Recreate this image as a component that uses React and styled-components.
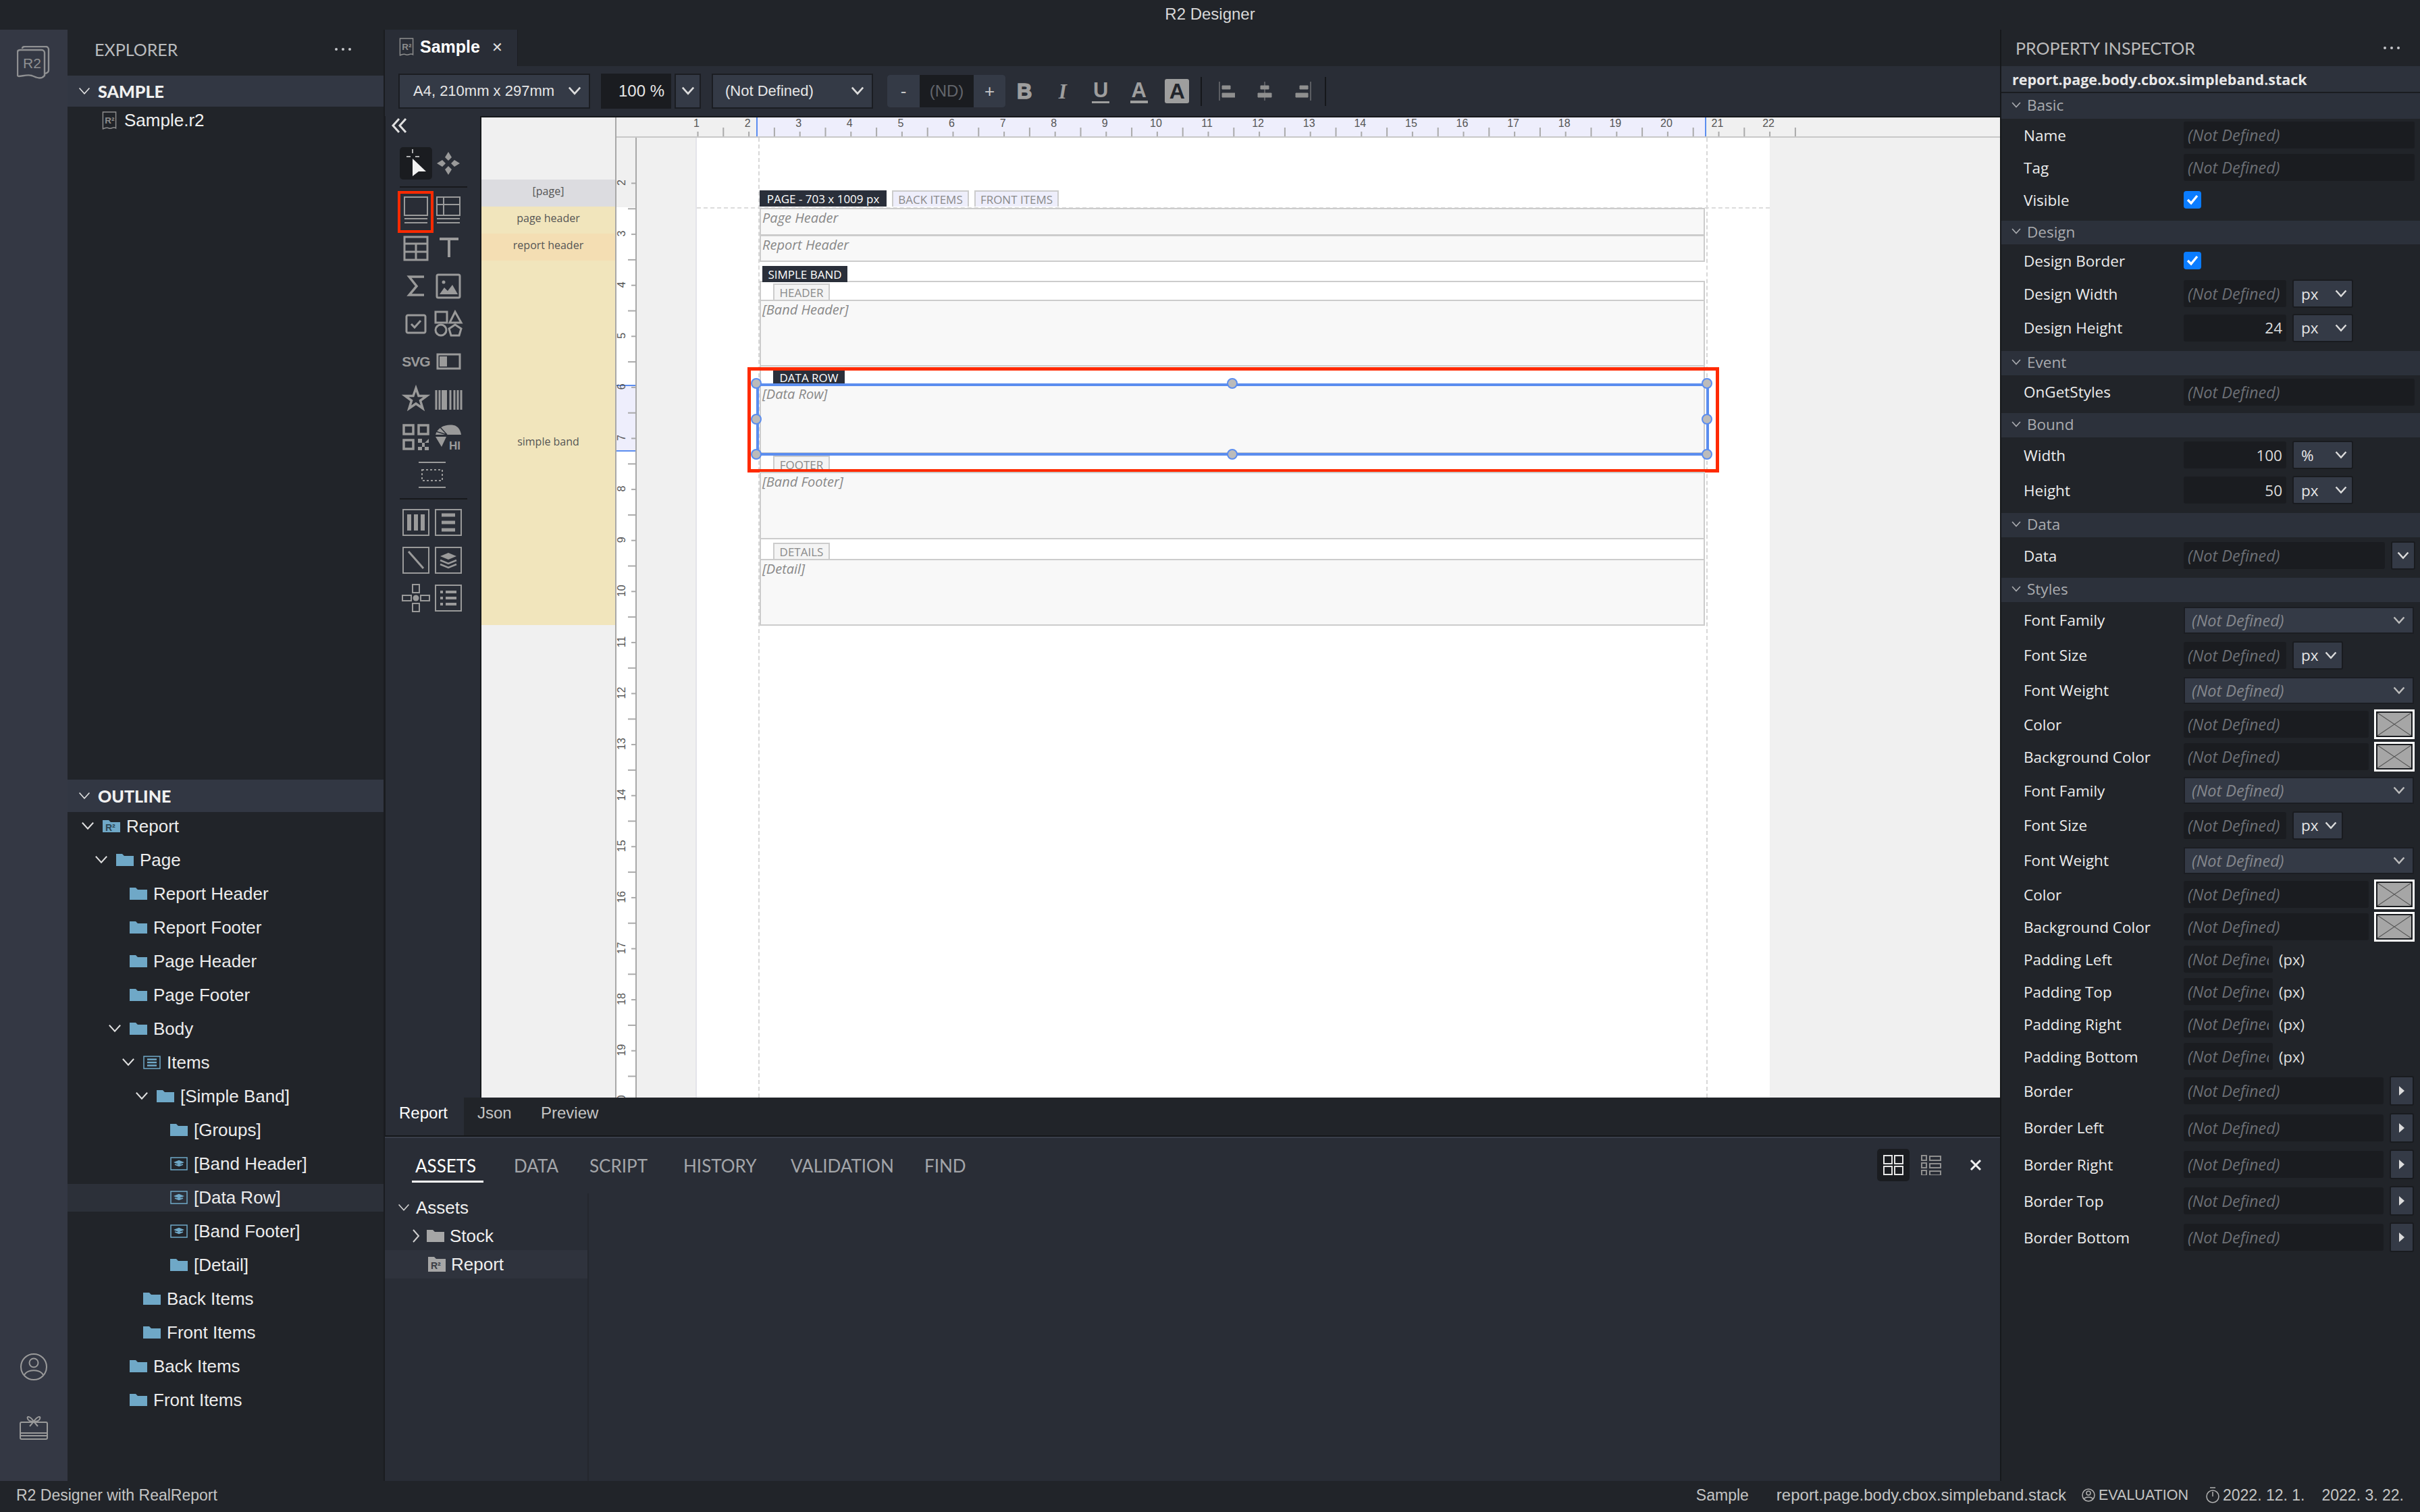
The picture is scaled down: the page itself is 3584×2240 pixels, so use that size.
import React from 'react';
import styled, { createGlobalStyle } from 'styled-components';

const UI = '"Liberation Sans", Arial, sans-serif';
const NOTO = '"Open Sans", "Noto Sans", sans-serif';
const HEAD = 'Lato, "Open Sans", sans-serif';

const GlobalStyle = createGlobalStyle`
  html, body {
    margin: 0;
    padding: 0;
    background: #212429;
    overflow: hidden;
  }
  *, *::before, *::after {
    box-sizing: border-box;
  }
`;

const Shell = styled.div`
  width: 3584px;
  height: 2240px;
  display: grid;
  grid-template-rows: 44px 1fr 46px;
  font-family: ${UI};
  color: #e6e6e6;
  overflow: hidden;
`;

const TitleBar = styled.div`
  background: #212429;
  color: #d8d8d8;
  font-size: 24px;
  display: flex;
  align-items: center;
  justify-content: center;
  padding-bottom: 2px;
`;

const Main = styled.div`
  display: grid;
  grid-template-columns: 100px 470px 2392px 622px;
  min-height: 0;
`;

const ActivityBar = styled.div`
  background: #343844;
  display: flex;
  flex-direction: column;
  align-items: center;
  padding: 24px 0 60px;
`;

const ActivitySpacer = styled.div`
  flex: 1;
`;

const ActivityGap = styled.div`
  height: 50px;
`;

const Explorer = styled.div`
  background: #212429;
  display: flex;
  flex-direction: column;
  border-right: 2px solid #1a1c20;
  min-height: 0;
`;

const ExplorerTop = styled.div`
  height: 1111px;
`;

const PanelHead = styled.div`
  height: 68px;
  display: flex;
  align-items: center;
  justify-content: space-between;
  padding: 0 48px 10px 40px;
  font-family: ${HEAD};
  font-size: 25px;
  color: #b9bbbe;
`;

const Dots = styled.span`
  display: flex;
  gap: 6px;
  i {
    width: 4px;
    height: 4px;
    border-radius: 50%;
    background: #c4c6c9;
  }
`;

const SectionBar = styled.div`
  height: ${p => p.$h}px;
  background: #323743;
  display: flex;
  align-items: center;
  gap: 10px;
  padding-left: 15px;
  font-family: ${HEAD};
  font-weight: 900;
  font-size: 25px;
  color: #f0f0f0;
`;

const FileRow = styled.div`
  height: 40px;
  display: flex;
  align-items: center;
  gap: 10px;
  padding-left: 50px;
  font-size: 26px;
  color: #f0f0f0;
`;

const TreeList = styled.div`
  margin-top: -4px;
`;

const TreeRow = styled.div`
  height: 50px;
  display: flex;
  align-items: center;
`;

const TreeInner = styled.div`
  height: 41px;
  width: 100%;
  display: flex;
  align-items: center;
  padding-left: ${p => 19 + p.$depth * 20}px;
  background: ${p => (p.$selected ? '#2c3039' : 'transparent')};
  font-size: 26px;
  color: #ececec;
`;

const Chevron = styled.span`
  width: 33px;
  display: flex;
  align-items: center;
`;

const NodeIcon = styled.span`
  width: 26px;
  margin-right: 9px;
  display: flex;
`;

const Center = styled.div`
  background: #292d36;
  display: flex;
  flex-direction: column;
  min-height: 0;
  min-width: 0;
`;

const TabStrip = styled.div`
  height: 54px;
  background: #212429;
  display: flex;
`;

const DocTab = styled.div`
  width: 197px;
  background: #292d36;
  display: flex;
  align-items: center;
  padding: 0 0 3px 20px;
  gap: 8px;
  font-size: 25px;
  font-weight: 700;
  color: #fff;
  border-right: 1px solid #1b1d21;
`;

const CloseMark = styled.span`
  margin-left: 9px;
  font-weight: 400;
  font-size: 20px;
  color: #e0e0e0;
`;

const Toolbar = styled.div`
  height: 74px;
  display: flex;
  align-items: center;
  padding: 0 0 0 20px;
  font-size: 22px;
  color: #e6e6e6;
`;

const Select = styled.div`
  width: ${p => p.$w}px;
  height: ${p => p.$h || 52}px;
  margin: 0 ${p => p.$mr || 0}px 0 ${p => p.$ml || 0}px;
  flex-shrink: 0;
  background: #343a46;
  border: 2px solid #1b1d22;
  display: flex;
  align-items: center;
  justify-content: space-between;
  padding: 0 10px 0 ${p => p.$pl || 20}px;
  font-size: ${p => (p.$italic ? 23.5 : 22)}px;
  font-family: ${p => (p.$alt ? NOTO : UI)};
  font-style: ${p => (p.$italic ? 'italic' : 'normal')};
  color: ${p => (p.$italic ? '#85888e' : '#e6e6e6')};
`;

const ZoomValue = styled.div`
  width: 104px;
  height: 52px;
  margin-left: 16px;
  margin-right: 5px;
  background: #1a1c20;
  font-size: 24px;
  display: flex;
  align-items: center;
  justify-content: flex-end;
  padding-right: 10px;
`;

const Stepper = styled.div`
  width: 175px;
  height: 48px;
  margin-left: 21px;
  display: grid;
  grid-template-columns: 48px 80px 47px;
  background: #1a1c20;
  border-radius: 4px;
  overflow: hidden;
`;

const StepButton = styled.div`
  background: #343a46;
  display: flex;
  align-items: center;
  justify-content: center;
  font-size: 26px;
  color: #c8c8c8;
`;

const StepValue = styled.div`
  display: flex;
  align-items: center;
  justify-content: center;
  color: #62656b;
  font-size: 24px;
`;

const FormatIcon = styled.span`
  width: 56.5px;
  display: flex;
  justify-content: center;
  flex-shrink: 0;
`;

const FormatLetter = styled.span`
  height: 36px;
  min-width: 26px;
  display: flex;
  align-items: center;
  justify-content: center;
  font-family: ${p => (p.$serif ? '"Liberation Serif", serif' : UI)};
  font-style: ${p => (p.$serif ? 'italic' : 'normal')};
  font-weight: 700;
  font-size: 31px;
  line-height: 1;
  color: #9e9e9e;
  border-bottom: ${p => (p.$under ? `${p.$under}px solid #9e9e9e` : '0')};
  -webkit-text-stroke: ${p => (p.$heavy ? '1.5px #9e9e9e' : '0')};
`;

const FormatBox = styled.span`
  width: 36px;
  height: 36px;
  display: flex;
  align-items: center;
  justify-content: center;
  background: #9e9e9e;
  border-radius: 3px;
  font-weight: 700;
  font-size: 32px;
  line-height: 1;
  color: #22252c;
`;

const ToolSep = styled.span`
  width: 2px;
  height: 43px;
  background: #15171a;
  margin: 0 ${p => p.$mr || 0}px 0 ${p => p.$ml || 0}px;
`;

const Workspace = styled.div`
  flex: 1;
  display: flex;
  min-height: 0;
`;

const ToolRail = styled.div`
  width: 141px;
  flex-shrink: 0;
  padding-left: 21px;
  border-left: 1px solid #1b1d21;
`;

const Collapse = styled.div`
  height: 46px;
  margin-left: -13px;
  padding-top: 1px;
`;

const ToolRow = styled.div`
  display: grid;
  grid-template-columns: 48px 48px;
`;

const ToolGrid = styled.div`
  display: grid;
  grid-template-columns: 48px 48px;
  grid-auto-rows: 56px;
`;

const Tool = styled.div`
  height: ${p => p.$h || 56}px;
  grid-column: ${p => (p.$wide ? 'span 2' : 'auto')};
  position: relative;
  display: flex;
  align-items: center;
  justify-content: center;
  background: ${p => (p.$active ? '#1a1c20' : 'transparent')};
  border-radius: ${p => (p.$active ? 5 : 0)}px;
  &::after {
    content: '';
    display: ${p => (p.$marked ? 'block' : 'none')};
    position: absolute;
    left: -3px;
    top: 0;
    width: 53px;
    height: 62px;
    border: 4px solid #ff2a00;
  }
`;

const RailDivider = styled.div`
  width: 100px;
  height: 2px;
  margin: ${p => p.$m};
  background: #17191c;
`;

const Canvas = styled.div`
  flex: 1;
  min-width: 0;
  display: flex;
  background: #f0f0f0;
  border-top: 2px solid #16181b;
  border-left: 2px solid #16181b;
`;

const BandLabels = styled.div`
  width: 200px;
  flex-shrink: 0;
  padding-top: 92px;
  border-right: 2px solid #a8a8a8;
  font-family: ${NOTO};
  font-size: 16px;
  color: #555;
`;

const BandLabel = styled.div`
  height: ${p => p.$h}px;
  background: ${p => p.$bg};
  display: flex;
  justify-content: center;
  align-items: ${p => (p.$mid ? 'center' : 'flex-start')};
  padding-top: ${p => (p.$mid ? 0 : 6)}px;
  padding-bottom: ${p => (p.$mid ? 5 : 0)}px;
`;

const Stage = styled.div`
  flex: 1;
  min-width: 0;
  display: flex;
  flex-direction: column;
`;

const StageBody = styled.div`
  flex: 1;
  display: flex;
  min-height: 0;
`;

const RulerSvg = styled.svg`
  display: block;
  flex-shrink: 0;
`;

const PageArea = styled.div`
  flex: 1;
  min-width: 0;
  overflow: hidden;
  padding-left: 87px;
`;

const Page = styled.div`
  position: relative;
  width: 1591px;
  height: 100%;
  background: #fff;
  border-left: 2px solid #e4e4ea;
  padding-left: 91px;
  &::before {
    content: '';
    position: absolute;
    left: 0;
    right: 0;
    top: 103px;
    border-top: 2px dashed #dcdcdc;
  }
`;

const Margins = styled.div`
  position: relative;
  width: 1406px;
  height: 100%;
  border-left: 2px dashed #d8d8d8;
  border-right: 2px dashed #d8d8d8;
  padding-top: 78px;
  font-family: ${NOTO};
`;

const TagRow = styled.div`
  display: flex;
  gap: 8px;
  height: 24px;
  position: relative;
`;

const DarkTag = styled.div`
  width: ${p => p.$w}px;
  height: ${p => p.$h || 24}px;
  margin-top: ${p => p.$mt || 0}px;
  margin-left: ${p => p.$ml || 0}px;
  background: #2a2f3a;
  color: #fff;
  font-size: 17px;
  display: flex;
  align-items: center;
  justify-content: center;
  white-space: nowrap;
  position: relative;
`;

const LightTag = styled.div`
  width: ${p => p.$w}px;
  height: 24px;
  background: ${p => (p.$tint ? '#eeeefb' : '#f4f4f4')};
  border: 2px solid #ccc;
  border-bottom: 0;
  color: #8a8a8a;
  font-size: 17px;
  display: flex;
  align-items: center;
  justify-content: center;
  white-space: nowrap;
`;

const BandBox = styled.div`
  position: relative;
  width: 1400px;
  height: ${p => p.$h}px;
  margin-top: ${p => p.$mt || 0}px;
  background: #f8f8f8;
  border: 2px solid #ccc;
  border-top-width: ${p => p.$top ?? 2}px;
  padding: 0 0 0 2px;
  font-size: 20px;
  font-style: italic;
  color: #888;
  line-height: 26px;
`;

const SimpleHead = styled.div`
  height: ${p => p.$h}px;
  width: 1400px;
  display: flex;
  align-items: flex-end;
  border-left: 2px solid #ccc;
  border-right: 2px solid #ccc;
  border-top: ${p => (p.$rule ? '2px solid #ccc' : '0')};
  margin-top: ${p => (p.$rule ? -2 : 0)}px;
  padding-left: 18px;
`;

const Selection = styled.div`
  position: absolute;
  left: -7px;
  right: -8px;
  top: -3px;
  bottom: -5px;
  border: 4px solid #5b8def;
  border-radius: 3px;
`;

const Handle = styled.span`
  position: absolute;
  width: 16px;
  height: 16px;
  border-radius: 50%;
  background: #bbb;
  border: 2px solid #5b8def;
  left: ${p => p.$x};
  top: ${p => p.$y};
  transform: translate(-50%, -50%);
`;

const Annotation = styled.div`
  position: absolute;
  left: -20px;
  right: -23px;
  top: -27px;
  bottom: -30px;
  border: 5px solid #ff2a00;
`;

const ViewTabs = styled.div`
  height: 56px;
  background: #212429;
  display: flex;
  font-size: 24px;
  color: #c8c8c8;
  border-left: 1px solid #1b1d21;
`;

const ViewTab = styled.div`
  width: ${p => p.$w}px;
  background: ${p => (p.$active ? '#292d36' : 'transparent')};
  color: ${p => (p.$active ? '#fff' : '#c4c4c4')};
  display: flex;
  align-items: center;
  padding-bottom: 10px;
  padding-left: ${p => p.$pl}px;
`;

const BottomPanel = styled.div`
  flex: 0 0 512px;
  border-top: 2px solid #15171a;
  box-shadow: inset 0 2px 0 #3a3f4a;
  display: flex;
  flex-direction: column;
  position: relative;
`;

const BottomTabs = styled.div`
  height: 68px;
  padding: 18px 0 0 40px;
  display: flex;
  font-family: ${HEAD};
  font-size: 26px;
`;

const BottomTab = styled.div`
  width: ${p => p.$w}px;
  height: 50px;
  margin-right: ${p => p.$mr || 0}px;
  padding: 9px 0 0 5px;
  border-bottom: 3px solid ${p => (p.$active ? '#fff' : 'transparent')};
  color: ${p => (p.$active ? '#fff' : '#a3a5a9')};
`;

const BottomTools = styled.div`
  position: absolute;
  top: 18px;
  left: 2210px;
  display: flex;
  align-items: center;
`;

const ViewToggle = styled.span`
  width: 48px;
  height: 48px;
  display: flex;
  align-items: center;
  justify-content: center;
  background: ${p => (p.$active ? '#1a1c20' : 'transparent')};
  border-radius: 5px;
  margin-right: ${p => p.$mr || 0}px;
`;

const AssetPane = styled.div`
  flex: 1;
  width: 302px;
  margin-top: 16px;
  border-right: 2px solid #24272e;
  font-size: 26px;
  color: #f0f0f0;
`;

const AssetRow = styled.div`
  height: 42px;
  display: flex;
  align-items: center;
  gap: 8px;
  padding-left: ${p => p.$pl}px;
  background: ${p => (p.$selected ? '#2f333d' : 'transparent')};
`;

const Inspector = styled.div`
  background: #212429;
  border-left: 2px solid #16181b;
  font-family: ${NOTO};
  min-height: 0;
  overflow: hidden;
`;

const InspectorHead = styled.div`
  height: 54px;
  display: flex;
  align-items: center;
  justify-content: space-between;
  padding: 0 30px 0 21px;
  font-family: ${HEAD};
  font-size: 25px;
  color: #bbb;
`;

const PathBar = styled.div`
  height: 40px;
  background: #2d323c;
  display: flex;
  align-items: center;
  padding-left: 16px;
  font-weight: 700;
  font-size: 21.5px;
  color: #e8e8e8;
  border-bottom: 2px solid #1a1c20;
`;

const Group = styled.div`
  height: ${p => p.$h || 36}px;
  margin-top: ${p => p.$mt || 0}px;
  background: #2c313b;
  display: flex;
  align-items: center;
  gap: 8px;
  padding: 0 0 3px 14px;
  font-size: 22.5px;
  color: #a9abaf;
`;

const PropRow = styled.div`
  height: ${p => p.$h}px;
  display: flex;
  align-items: center;
  padding-left: 33px;
  font-size: 22.5px;
  color: #ececec;
`;

const PropLabel = styled.div`
  width: 237px;
  flex-shrink: 0;
`;

const ValueBox = styled.div`
  width: ${p => p.$w}px;
  height: 40px;
  flex-shrink: 0;
  background: #1a1c20;
  border-radius: 3px;
  display: flex;
  align-items: center;
  justify-content: ${p => (p.$num ? 'flex-end' : 'flex-start')};
  padding: 0 6px;
  white-space: nowrap;
  font-size: ${p => (p.$num ? 22.5 : 23.5)}px;
  font-style: ${p => (p.$num ? 'normal' : 'italic')};
  color: ${p => (p.$num ? '#dcdcdc' : '#6c6f75')};
`;

const ValueText = styled.span`
  overflow: hidden;
  min-width: 0;
`;

const UnitSelect = styled.div`
  width: ${p => p.$w || 90}px;
  height: 42px;
  margin-left: ${p => p.$ml || 9}px;
  flex-shrink: 0;
  background: #343a46;
  border: 2px solid #191b1f;
  border-radius: 3px;
  display: flex;
  align-items: center;
  justify-content: space-between;
  padding: 0 6px 0 11px;
  color: #e6e6e6;
`;

const IconButton = styled.div`
  width: 36px;
  height: ${p => p.$h || 42}px;
  margin-left: ${p => p.$ml}px;
  flex-shrink: 0;
  background: #343a46;
  border: 2px solid #191b1f;
  border-radius: 3px;
  display: flex;
  align-items: center;
  justify-content: center;
`;

const Check = styled.div`
  width: 26px;
  height: 26px;
  background: #0a7cff;
  border-radius: 4px;
  display: flex;
  align-items: center;
  justify-content: center;
`;

const Swatch = styled.div`
  width: 60px;
  height: 44px;
  margin-left: 8px;
  background: #1a1c20;
  border: 3px solid #fff;
  padding: 2px;
  display: flex;
`;

const PxNote = styled.span`
  margin-left: 9px;
  color: #e0e0e0;
  font-size: 22px;
`;

const StatusBar = styled.div`
  background: #212429;
  display: flex;
  align-items: center;
  justify-content: space-between;
  padding: 0 24px 4px 24px;
  font-size: 23px;
  color: #c4c4c4;
`;

const StatusRight = styled.div`
  display: flex;
  align-items: center;
`;

const StatusItem = styled.span`
  display: flex;
  align-items: center;
  gap: 5px;
  margin-left: ${p => p.$ml || 0}px;
  font-size: ${p => p.$size || 23}px;
`;

const GRAY = '#9a9a9a';

function Caret({ size = 24, color = '#dcdcdc', w = 3 }) {
  return (
    <svg width={size} height={size * 0.7} viewBox="0 0 24 17" fill="none" style={{ flexShrink: 0 }}>
      <path d="M3 3 L12 13 L21 3" stroke={color} strokeWidth={w} />
    </svg>
  );
}

function Folder({ color = '#6fa8c7' }) {
  return (
    <svg width="26" height="20" viewBox="0 0 26 20">
      <path d="M0 1 H9 L12 4 H26 V19 H0 Z" fill={color} />
    </svg>
  );
}

function R2Folder() {
  return (
    <svg width="26" height="20" viewBox="0 0 26 20">
      <path d="M0 1 H9 L12 4 H26 V19 H0 Z" fill="#6fa8c7" />
      <text x="4" y="17" fontSize="14" fontWeight="700" fontFamily={UI} fill="#2c4653">R²</text>
    </svg>
  );
}

function FramedIcon({ kind }) {
  return (
    <svg width="26" height="20" viewBox="0 0 26 20" fill="none">
      <rect x="1" y="1" width="24" height="18" stroke="#6fa8c7" strokeWidth="1.5" />
      {kind === 'stack' ? (
        <path d="M7 8 L13 5.5 L19 8 L13 10.5 Z M7 11 L13 13.5 L19 11" stroke="#6fa8c7" strokeWidth="1.5" fill="#6fa8c7" />
      ) : (
        <path d="M6 5.5 H20 M6 10 H20 M6 14.5 H20" stroke="#6fa8c7" strokeWidth="2.5" />
      )}
    </svg>
  );
}

function DocGlyph({ size = 24 }) {
  return (
    <svg width={size} height={size * 1.2} viewBox="0 0 24 30" fill="none" style={{ flexShrink: 0 }}>
      <path d="M2 2 H22 V27 C18 24 14 29 11 27 C8 25 5 27 2 28 Z" stroke="#8e8e8e" strokeWidth="1.5" />
      <text x="5" y="20" fontSize="14" fontFamily={UI} fontWeight="700" fill="#8e8e8e">R²</text>
    </svg>
  );
}

function Logo() {
  return (
    <svg width="50" height="50" viewBox="0 0 50 50" fill="none">
      <path d="M8 4 C8 2 10 1 12 1 H43 C45 1 47 3 47 5 V36 C47 39 45 40 42 41" stroke="#8f9092" strokeWidth="2.4" />
      <path d="M1 9 C1 7 3 6 5 6 H37 C39 6 41 8 41 10 V44 C36 50 29 47 22 44 C15 42 8 45 3 45 C1 45 1 44 1 42 Z" stroke="#8f9092" strokeWidth="2.4" fill="#343844" />
      <text x="9" y="33" fontSize="21" fontFamily={UI} fill="#8f9092">R2</text>
    </svg>
  );
}

function UserIcon() {
  return (
    <svg width="42" height="42" viewBox="0 0 42 42" fill="none" stroke={GRAY} strokeWidth="2">
      <circle cx="21" cy="21" r="19" />
      <circle cx="21" cy="15" r="6.5" />
      <path d="M7 33 C12 24 30 24 35 33" />
    </svg>
  );
}

function GiftIcon() {
  return (
    <svg width="42" height="38" viewBox="0 0 42 38" fill="none" stroke={GRAY} strokeWidth="2">
      <rect x="1" y="11" width="40" height="25" rx="2" />
      <path d="M1 27 H41 M1 31 H41" />
      <path d="M21 10 C16 2 10 1 12 6 C13 9 18 10 21 10 C24 10 29 9 30 6 C32 1 26 2 21 10 L15 17 M21 10 L27 17" />
    </svg>
  );
}

const toolIcons = {
  pointer: (
    <>
      <path d="M19 17 L39 36 L28 36 L19 43 Z" fill="#f2f2f2" stroke="none" />
      <path d="M19 3 V9 M10 14 H16 M23 14 H29" stroke="#e0e0e0" strokeWidth="1.5" />
    </>
  ),
  move: (
    <path d="M24 7 L29 15 L24 20 L19 15 Z M24 41 L29 33 L24 28 L19 33 Z M7 24 L15 19 L20 24 L15 29 Z M41 24 L33 19 L28 24 L33 29 Z" fill={GRAY} stroke="none" />
  ),
  band: <path d="M7 9 H41 V36 H7 Z M7 41 H41 M7 47 H41" />,
  bandTable: <path d="M7 9 H41 V36 H7 Z M7 20 H41 M17 9 V36 M7 41 H41 M7 47 H41" />,
  table: <path d="M7 12 H41 V46 H7 Z M7 22 H41 M24 22 V46 M7 34 H41" strokeWidth="3" />,
  text: <path d="M11 15 H39 M25 15 V42" strokeWidth="4" />,
  sigma: <path d="M36 15 H14 L25 29 L14 42 H36" strokeWidth="3.5" />,
  image: (
    <>
      <rect x="7" y="12" width="34" height="34" rx="2" strokeWidth="3" />
      <circle cx="17" cy="23" r="2.5" fill={GRAY} stroke="none" />
      <path d="M11 41 L18 31 L23 36 L30 27 L38 41 Z" fill={GRAY} stroke="none" />
    </>
  ),
  check: <path d="M12 16 H36 C37 16 38 17 38 18 V40 C38 41 37 42 36 42 H12 C11 42 10 41 10 40 V18 C10 17 11 16 12 16 Z M17 29 L22 34 L31 24" strokeWidth="3" />,
  shapes: (
    <g strokeWidth="3">
      <rect x="5" y="11" width="17" height="16" />
      <path d="M34 11 L43 27 H26 Z" />
      <circle cx="13" cy="38" r="8" />
      <path d="M34 30 L43 36 L40 46 H28 L25 36 Z" />
    </g>
  ),
  svg: <text x="24" y="36" textAnchor="middle" fontSize="21" fontWeight="700" fontFamily={UI} fill={GRAY} stroke="none" letterSpacing="-1">SVG</text>,
  toggle: (
    <>
      <rect x="8" y="18" width="33" height="21" strokeWidth="3" />
      <rect x="11" y="21" width="11" height="15" fill={GRAY} stroke="none" />
    </>
  ),
  star: <path d="M24 12 L28 23.5 H40 L30.5 30.5 L34 42 L24 35 L14 42 L17.5 30.5 L8 23.5 H20 Z" strokeWidth="3.5" />,
  barcode: (
    <>
      <path d="M6 15 V44 M11 15 V44 M33 15 V44 M38 15 V44 M43 15 V44 M27 15 V44" strokeWidth="3" />
      <path d="M18 15 V44" strokeWidth="8" />
    </>
  ),
  qr: (
    <g strokeWidth="3.5">
      <rect x="6" y="11" width="14" height="13" />
      <rect x="28" y="11" width="14" height="13" />
      <rect x="6" y="33" width="14" height="13" />
      <path d="M27 31 H33 V37 H27 Z M37 37 H43 V31 M33 37 H37 V43 H33 Z M27 43 H33 V48 H27 Z M37 43 H43 V48 H37 Z" fill={GRAY} strokeWidth="0" />
    </g>
  ),
  chart: (
    <>
      <path d="M5 25 C8 14 20 9 32 11 C38 12 42 18 43 25 H23 Z" fill={GRAY} stroke="none" />
      <path d="M5 28 H21 L14 43 Z" fill={GRAY} stroke="none" />
      <path d="M22 25 L5 20 M22 25 L12 14" stroke="#292d36" strokeWidth="1.5" />
      <text x="25" y="47" fontSize="17" fontWeight="700" fontFamily={UI} fill={GRAY} stroke="none">HI</text>
    </>
  ),
  frame: (
    <>
      <path d="M28 10 H68 M28 47 H68" />
      <rect x="33" y="21" width="30" height="16" strokeDasharray="3 3" strokeWidth="2" />
    </>
  ),
  columns: (
    <>
      <rect x="5" y="9" width="38" height="38" strokeWidth="2" />
      <path d="M14 16 V40 M24 16 V40 M34 16 V40" strokeWidth="6" />
    </>
  ),
  rows: (
    <>
      <rect x="5" y="9" width="38" height="38" strokeWidth="2" />
      <path d="M14 17 H34 M14 28 H34 M14 39 H34" strokeWidth="5" />
    </>
  ),
  line: (
    <>
      <rect x="5" y="9" width="38" height="38" strokeWidth="2" />
      <path d="M13 15 L35 40" strokeWidth="3" />
    </>
  ),
  layers: (
    <>
      <rect x="5" y="9" width="38" height="38" strokeWidth="2" />
      <path d="M12 22 L24 17 L36 22 L24 27 Z" fill={GRAY} stroke="none" />
      <path d="M12 28 L24 33 L36 28 M12 34 L24 39 L36 34" strokeWidth="2.5" />
    </>
  ),
  nodes: (
    <>
      <rect x="19" y="8" width="10" height="12" strokeWidth="2" />
      <rect x="19" y="36" width="10" height="12" strokeWidth="2" />
      <rect x="4" y="24" width="13" height="8" strokeWidth="2" />
      <rect x="31" y="24" width="13" height="8" strokeWidth="2" />
      <circle cx="24" cy="28" r="4.5" fill={GRAY} stroke="none" />
    </>
  ),
  list: (
    <>
      <rect x="5" y="9" width="38" height="38" strokeWidth="2" />
      <path d="M12 19 H16 M12 28 H16 M12 37 H16 M20 19 H36 M20 28 H36 M20 37 H36" strokeWidth="4" />
    </>
  )
};

function ToolIcon({ name, h = 56, w = 48 }) {
  return (
    <svg width={w} height={h} viewBox={`0 0 ${w} ${h}`} fill="none" stroke={GRAY} strokeWidth="2">
      {toolIcons[name]}
    </svg>
  );
}

function AlignGlyph({ kind }) {
  const parts = {
    left: <path d="M1 0 V28 M5 6 H17 V11 H5 Z M5 17 H24 V23 H5 Z" />,
    center: <path d="M12 0 V28 M6 6 H18 V11 H6 Z M2 17 H22 V23 H2 Z" />,
    right: <path d="M23 0 V28 M7 6 H19 V11 H7 Z M1 17 H19 V23 H1 Z" />
  };
  return (
    <svg width="24" height="28" viewBox="0 0 24 28" fill="#8f8f8f" stroke="#8f8f8f" strokeWidth="1">
      {parts[kind]}
    </svg>
  );
}

function HorizontalRuler() {
  const digits = Array.from({ length: 22 }, (_, i) => i + 1);
  return (
    <RulerSvg width="2049" height="30" viewBox="0 0 2049 30">
      <rect width="2049" height="30" fill="#f0f0f0" />
      <rect x="207" width="1405" height="29" fill="#eeeefc" />
      <rect x="207" width="2" height="29" fill="#5b8def" />
      <rect x="1612" width="2" height="29" fill="#5b8def" />
      {digits.map(n => {
        const x = 119.5 + (n - 1) * 75.6;
        return (
          <g key={n}>
            <text x={x - 1} y="14" textAnchor="middle" fontFamily={UI} fontSize="16" fill="#555">{n}</text>
            <rect x={x} y="21" width="2" height="7" fill="#aaa" />
            <rect x={x + 37.8} y="15" width="2" height="13" fill="#aaa" />
          </g>
        );
      })}
      <rect y="28" width="2049" height="2" fill="#c8c8c8" />
    </RulerSvg>
  );
}

function VerticalRuler() {
  const digits = Array.from({ length: 19 }, (_, i) => i + 2);
  return (
    <RulerSvg width="30" height="1423" viewBox="0 0 30 1423">
      <rect width="30" height="1423" fill="#fff" />
      <rect width="30" height="103" fill="#f0f0f0" />
      <rect y="366" width="28" height="98" fill="#eeeefc" />
      <rect y="366" width="28" height="2" fill="#5b8def" />
      <rect y="463" width="28" height="2" fill="#5b8def" />
      {digits.map(n => {
        const y = 66.5 + (n - 2) * 75.6;
        return (
          <g key={n}>
            <text transform={`translate(13 ${y}) rotate(-90)`} textAnchor="middle" fontFamily={UI} fontSize="16" fill="#555">{n}</text>
            <rect x="22" y={y} width="6" height="2" fill="#aaa" />
            <rect x="17" y={y + 37.8} width="11" height="2" fill="#aaa" />
          </g>
        );
      })}
      <rect x="28" width="2" height="1423" fill="#a8a8a8" />
    </RulerSvg>
  );
}

const treeNodes = [
  { d: 0, label: 'Report', open: true, icon: 'r2' },
  { d: 1, label: 'Page', open: true },
  { d: 2, label: 'Report Header' },
  { d: 2, label: 'Report Footer' },
  { d: 2, label: 'Page Header' },
  { d: 2, label: 'Page Footer' },
  { d: 2, label: 'Body', open: true },
  { d: 3, label: 'Items', open: true, icon: 'items' },
  { d: 4, label: '[Simple Band]', open: true },
  { d: 5, label: '[Groups]' },
  { d: 5, label: '[Band Header]', icon: 'stack' },
  { d: 5, label: '[Data Row]', icon: 'stack', selected: true },
  { d: 5, label: '[Band Footer]', icon: 'stack' },
  { d: 5, label: '[Detail]' },
  { d: 3, label: 'Back Items' },
  { d: 3, label: 'Front Items' },
  { d: 2, label: 'Back Items' },
  { d: 2, label: 'Front Items' }
];

function NodeGlyph({ icon }) {
  if (icon === 'r2') return <R2Folder />;
  if (icon === 'items') return <FramedIcon kind="items" />;
  if (icon === 'stack') return <FramedIcon kind="stack" />;
  return <Folder />;
}

const NOT_DEFINED = '(Not Defined)';

function EmptyValue({ w }) {
  return (
    <ValueBox $w={w}>
      <ValueText>{NOT_DEFINED}</ValueText>
    </ValueBox>
  );
}

function PlainRow({ label, h, w = 342 }) {
  return (
    <PropRow $h={h}>
      <PropLabel>{label}</PropLabel>
      <EmptyValue w={w} />
    </PropRow>
  );
}

function CheckRow({ label, h }) {
  return (
    <PropRow $h={h}>
      <PropLabel>{label}</PropLabel>
      <Check>
        <svg width="20" height="18" viewBox="0 0 20 18" fill="none">
          <path d="M3 9 L8 14 L17 3" stroke="#fff" strokeWidth="3.4" />
        </svg>
      </Check>
    </PropRow>
  );
}

function UnitRow({ label, h, value, unit = 'px', unitW }) {
  return (
    <PropRow $h={h}>
      <PropLabel>{label}</PropLabel>
      {value ? <ValueBox $w={152} $num>{value}</ValueBox> : <EmptyValue w={152} />}
      <UnitSelect $w={unitW}>
        {unit}
        <Caret size={20} />
      </UnitSelect>
    </PropRow>
  );
}

function SelectRow({ label, h }) {
  return (
    <PropRow $h={h}>
      <PropLabel>{label}</PropLabel>
      <Select $w={341} $h={40} $italic $alt $pl={10}>
        {NOT_DEFINED}
        <Caret size={20} color="#bcbcbc" />
      </Select>
    </PropRow>
  );
}

function ColorRow({ label, h }) {
  return (
    <PropRow $h={h}>
      <PropLabel>{label}</PropLabel>
      <EmptyValue w={274} />
      <Swatch>
        <svg width="100%" height="100%" viewBox="0 0 48 32" preserveAspectRatio="none">
          <rect width="48" height="32" fill="#a6a6a6" />
          <path d="M0 0 L48 32 M48 0 L0 32" stroke="#555" strokeWidth="1" />
        </svg>
      </Swatch>
    </PropRow>
  );
}

function PaddingRow({ label }) {
  return (
    <PropRow $h={48}>
      <PropLabel>{label}</PropLabel>
      <EmptyValue w={132} />
      <PxNote>(px)</PxNote>
    </PropRow>
  );
}

function BorderRow({ label, h }) {
  return (
    <PropRow $h={h}>
      <PropLabel>{label}</PropLabel>
      <EmptyValue w={296} />
      <IconButton $ml={9} $h={44}>
        <svg width="10" height="14" viewBox="0 0 10 14">
          <path d="M1 0 L9 7 L1 14 Z" fill="#dcdcdc" />
        </svg>
      </IconButton>
    </PropRow>
  );
}

function GroupHead({ label, h, mt }) {
  return (
    <Group $h={h} $mt={mt}>
      <Caret size={16} color="#a9abaf" w={2.5} />
      {label}
    </Group>
  );
}

export default function App() {
  return (
    <Shell>
      <GlobalStyle />
      <TitleBar>R2 Designer</TitleBar>
      <Main>
        <ActivityBar>
          <Logo />
          <ActivitySpacer />
          <UserIcon />
          <ActivityGap />
          <GiftIcon />
        </ActivityBar>

        <Explorer>
          <ExplorerTop>
            <PanelHead>
              EXPLORER
              <Dots><i /><i /><i /></Dots>
            </PanelHead>
            <SectionBar $h={46}>
              <Caret size={20} color="#e0e0e0" w={2} />
              SAMPLE
            </SectionBar>
            <FileRow>
              <DocGlyph />
              Sample.r2
            </FileRow>
          </ExplorerTop>
          <SectionBar $h={48}>
            <Caret size={20} color="#e0e0e0" w={2} />
            OUTLINE
          </SectionBar>
          <TreeList>
            {treeNodes.map((node, i) => (
              <TreeRow key={i}>
                <TreeInner $depth={node.d} $selected={node.selected}>
                  <Chevron>{node.open && <Caret size={22} color="#e0e0e0" w={2.2} />}</Chevron>
                  <NodeIcon><NodeGlyph icon={node.icon} /></NodeIcon>
                  {node.label}
                </TreeInner>
              </TreeRow>
            ))}
          </TreeList>
        </Explorer>

        <Center>
          <TabStrip>
            <DocTab>
              <DocGlyph />
              Sample
              <CloseMark>✕</CloseMark>
            </DocTab>
          </TabStrip>
          <Toolbar>
            <Select $w={284}>
              A4, 210mm x 297mm
              <Caret size={22} />
            </Select>
            <ZoomValue>100 %</ZoomValue>
            <Select $w={39} $pl={7}>
              <Caret size={22} />
            </Select>
            <Select $w={239} $ml={16} $pl={18}>
              (Not Defined)
              <Caret size={22} />
            </Select>
            <Stepper>
              <StepButton>-</StepButton>
              <StepValue>(ND)</StepValue>
              <StepButton>+</StepButton>
            </Stepper>
            <FormatIcon><FormatLetter $heavy>B</FormatLetter></FormatIcon>
            <FormatIcon><FormatLetter $serif>I</FormatLetter></FormatIcon>
            <FormatIcon><FormatLetter $under={3}>U</FormatLetter></FormatIcon>
            <FormatIcon><FormatLetter $under={4}>A</FormatLetter></FormatIcon>
            <FormatIcon><FormatBox>A</FormatBox></FormatIcon>
            <ToolSep $ml={6} $mr={9} />
            <FormatIcon><AlignGlyph kind="left" /></FormatIcon>
            <FormatIcon><AlignGlyph kind="center" /></FormatIcon>
            <FormatIcon><AlignGlyph kind="right" /></FormatIcon>
            <ToolSep $ml={4} />
          </Toolbar>

          <Workspace>
            <ToolRail>
              <Collapse>
                <svg width="26" height="26" viewBox="0 0 26 26" fill="none" stroke="#e0e0e0" strokeWidth="3">
                  <path d="M12 3 L3 13 L12 23 M22 3 L13 13 L22 23" />
                </svg>
              </Collapse>
              <ToolRow>
                <Tool $active $h={48}><ToolIcon name="pointer" h={48} /></Tool>
                <Tool $h={48}><ToolIcon name="move" h={48} /></Tool>
              </ToolRow>
              <RailDivider $m="10px 0 5px" />
              <ToolGrid>
                <Tool $marked><ToolIcon name="band" /></Tool>
                <Tool><ToolIcon name="bandTable" /></Tool>
                <Tool><ToolIcon name="table" /></Tool>
                <Tool><ToolIcon name="text" /></Tool>
                <Tool><ToolIcon name="sigma" /></Tool>
                <Tool><ToolIcon name="image" /></Tool>
                <Tool><ToolIcon name="check" /></Tool>
                <Tool><ToolIcon name="shapes" /></Tool>
                <Tool><ToolIcon name="svg" /></Tool>
                <Tool><ToolIcon name="toggle" /></Tool>
                <Tool><ToolIcon name="star" /></Tool>
                <Tool><ToolIcon name="barcode" /></Tool>
                <Tool><ToolIcon name="qr" /></Tool>
                <Tool><ToolIcon name="chart" /></Tool>
                <Tool $wide><ToolIcon name="frame" w={96} /></Tool>
              </ToolGrid>
              <RailDivider $m="7px 0 6px" />
              <ToolGrid>
                <Tool><ToolIcon name="columns" /></Tool>
                <Tool><ToolIcon name="rows" /></Tool>
                <Tool><ToolIcon name="line" /></Tool>
                <Tool><ToolIcon name="layers" /></Tool>
                <Tool><ToolIcon name="nodes" /></Tool>
                <Tool><ToolIcon name="list" /></Tool>
              </ToolGrid>
            </ToolRail>

            <Canvas>
              <BandLabels>
                <BandLabel $h={40} $bg="#dcdce0">[page]</BandLabel>
                <BandLabel $h={40} $bg="#f1e5bc">page header</BandLabel>
                <BandLabel $h={40} $bg="#f4deb3">report header</BandLabel>
                <BandLabel $h={540} $bg="#f1e5bc" $mid>simple band</BandLabel>
              </BandLabels>
              <Stage>
                <HorizontalRuler />
                <StageBody>
                  <VerticalRuler />
                  <PageArea>
                    <Page>
                      <Margins>
                        <TagRow>
                          <DarkTag $w={188}>PAGE - 703 x 1009 px</DarkTag>
                          <LightTag $w={114} $tint>BACK ITEMS</LightTag>
                          <LightTag $w={125} $tint>FRONT ITEMS</LightTag>
                        </TagRow>
                        <BandBox $h={41} $mt={2}>Page Header</BandBox>
                        <BandBox $h={39} $top={1}>Report Header</BandBox>
                        <DarkTag $w={126} $ml={4} $mt={6}>SIMPLE BAND</DarkTag>
                        <SimpleHead $h={28} $rule>
                          <LightTag $w={84}>HEADER</LightTag>
                        </SimpleHead>
                        <BandBox $h={99}>[Band Header]</BandBox>
                        <SimpleHead $h={26}>
                          <DarkTag $w={106} $h={20}>DATA ROW</DarkTag>
                        </SimpleHead>
                        <BandBox $h={103}>
                          [Data Row]
                          <Selection />
                          <Handle $x="-7px" $y="-3px" />
                          <Handle $x="50%" $y="-3px" />
                          <Handle $x="calc(100% + 5px)" $y="-3px" />
                          <Handle $x="-7px" $y="50%" />
                          <Handle $x="calc(100% + 5px)" $y="50%" />
                          <Handle $x="-7px" $y="calc(100% + 3px)" />
                          <Handle $x="50%" $y="calc(100% + 3px)" />
                          <Handle $x="calc(100% + 5px)" $y="calc(100% + 3px)" />
                          <Annotation />
                        </BandBox>
                        <SimpleHead $h={27}>
                          <LightTag $w={84}>FOOTER</LightTag>
                        </SimpleHead>
                        <BandBox $h={100}>[Band Footer]</BandBox>
                        <SimpleHead $h={29}>
                          <LightTag $w={84}>DETAILS</LightTag>
                        </SimpleHead>
                        <BandBox $h={99}>[Detail]</BandBox>
                      </Margins>
                    </Page>
                  </PageArea>
                </StageBody>
              </Stage>
            </Canvas>
          </Workspace>

          <ViewTabs>
            <ViewTab $active $w={116} $pl={20}>Report</ViewTab>
            <ViewTab $w={114} $pl={20}>Json</ViewTab>
            <ViewTab $w={120} $pl={0}>Preview</ViewTab>
          </ViewTabs>

          <BottomPanel>
            <BottomTabs>
              <BottomTab $active $w={106} $mr={40}>ASSETS</BottomTab>
              <BottomTab $w={112}>DATA</BottomTab>
              <BottomTab $w={139}>SCRIPT</BottomTab>
              <BottomTab $w={159}>HISTORY</BottomTab>
              <BottomTab $w={198}>VALIDATION</BottomTab>
              <BottomTab $w={90}>FIND</BottomTab>
            </BottomTabs>
            <BottomTools>
              <ViewToggle $active $mr={8}>
                <svg width="30" height="30" viewBox="0 0 30 30" fill="none" stroke="#e6e6e6" strokeWidth="2">
                  <rect x="1" y="1" width="12" height="12" />
                  <rect x="17" y="1" width="12" height="12" />
                  <rect x="1" y="17" width="12" height="12" />
                  <rect x="17" y="17" width="12" height="12" />
                </svg>
              </ViewToggle>
              <ViewToggle $mr={32}>
                <svg width="30" height="30" viewBox="0 0 30 30" fill="none" stroke="#8f8f8f" strokeWidth="2">
                  <rect x="1" y="1" width="7" height="7" />
                  <rect x="13" y="2" width="16" height="6" />
                  <rect x="1" y="12" width="7" height="7" />
                  <rect x="13" y="13" width="16" height="6" />
                  <rect x="1" y="23" width="7" height="7" />
                  <rect x="13" y="24" width="16" height="6" />
                </svg>
              </ViewToggle>
              <svg width="20" height="20" viewBox="0 0 20 20" fill="none" stroke="#f0f0f0" strokeWidth="3">
                <path d="M3 3 L17 17 M17 3 L3 17" />
              </svg>
            </BottomTools>
            <AssetPane>
              <AssetRow $pl={18}>
                <Caret size={20} color="#d0d0d0" w={2} />
                Assets
              </AssetRow>
              <AssetRow $pl={38}>
                <svg width="16" height="24" viewBox="0 0 16 24" fill="none" stroke="#d0d0d0" strokeWidth="2">
                  <path d="M4 3 L12 12 L4 21" />
                </svg>
                <Folder color="#a6a6a6" />
                Stock
              </AssetRow>
              <AssetRow $pl={64} $selected>
                <svg width="26" height="24" viewBox="0 0 26 24">
                  <path d="M0 1 H9 L12 4 H26 V23 H0 Z" fill="#a6a6a6" />
                  <text x="4" y="19" fontSize="14" fontWeight="700" fontFamily={UI} fill="#3a3d44">R²</text>
                </svg>
                Report
              </AssetRow>
            </AssetPane>
          </BottomPanel>
        </Center>

        <Inspector>
          <InspectorHead>
            PROPERTY INSPECTOR
            <Dots><i /><i /><i /></Dots>
          </InspectorHead>
          <PathBar>report.page.body.cbox.simpleband.stack</PathBar>
          <GroupHead label="Basic" h={38} />
          <PlainRow label="Name" h={48} />
          <PlainRow label="Tag" h={48} />
          <CheckRow label="Visible" h={48} />
          <GroupHead label="Design" h={35} mt={7} />
          <CheckRow label="Design Border" h={48} />
          <UnitRow label="Design Width" h={50} />
          <UnitRow label="Design Height" h={51} value="24" />
          <GroupHead label="Event" mt={9} />
          <PlainRow label="OnGetStyles" h={49} />
          <GroupHead label="Bound" mt={7} />
          <UnitRow label="Width" h={52} value="100" unit="%" />
          <UnitRow label="Height" h={52} value="50" />
          <GroupHead label="Data" mt={8} />
          <PropRow $h={54}>
            <PropLabel>Data</PropLabel>
            <EmptyValue w={298} />
            <IconButton $ml={9}><Caret size={20} /></IconButton>
          </PropRow>
          <GroupHead label="Styles" mt={6} />
          <SelectRow label="Font Family" h={53} />
          <UnitRow label="Font Size" h={51} unitW={75} />
          <SelectRow label="Font Weight" h={53} />
          <ColorRow label="Color" h={48} />
          <ColorRow label="Background Color" h={48} />
          <SelectRow label="Font Family" h={52} />
          <UnitRow label="Font Size" h={51} unitW={75} />
          <SelectRow label="Font Weight" h={53} />
          <ColorRow label="Color" h={48} />
          <ColorRow label="Background Color" h={48} />
          <PaddingRow label="Padding Left" />
          <PaddingRow label="Padding Top" />
          <PaddingRow label="Padding Right" />
          <PaddingRow label="Padding Bottom" />
          <BorderRow label="Border" h={54} />
          <BorderRow label="Border Left" h={55} />
          <BorderRow label="Border Right" h={54} />
          <BorderRow label="Border Top" h={54} />
          <BorderRow label="Border Bottom" h={54} />
        </Inspector>
      </Main>

      <StatusBar>
        <span>R2 Designer with RealReport</span>
        <StatusRight>
          <StatusItem>Sample</StatusItem>
          <StatusItem $ml={41} $size={24}>report.page.body.cbox.simpleband.stack</StatusItem>
          <StatusItem $ml={23} $size={21.5}>
            <svg width="20" height="20" viewBox="0 0 20 20" fill="none" stroke="#b0b0b0" strokeWidth="1.5">
              <circle cx="10" cy="10" r="9" />
              <circle cx="10" cy="7" r="3" />
              <path d="M3 16 C6 12 14 12 17 16" />
            </svg>
            EVALUATION
          </StatusItem>
          <StatusItem $ml={26}>
            <svg width="20" height="24" viewBox="0 0 20 24" fill="none" stroke="#b0b0b0" strokeWidth="1.5">
              <circle cx="10" cy="14" r="9" />
              <path d="M6 1 H14 M10 14 V7" />
            </svg>
            2022. 12. 1.
          </StatusItem>
          <StatusItem $ml={25}>2022. 3. 22.</StatusItem>
        </StatusRight>
      </StatusBar>
    </Shell>
  );
}
